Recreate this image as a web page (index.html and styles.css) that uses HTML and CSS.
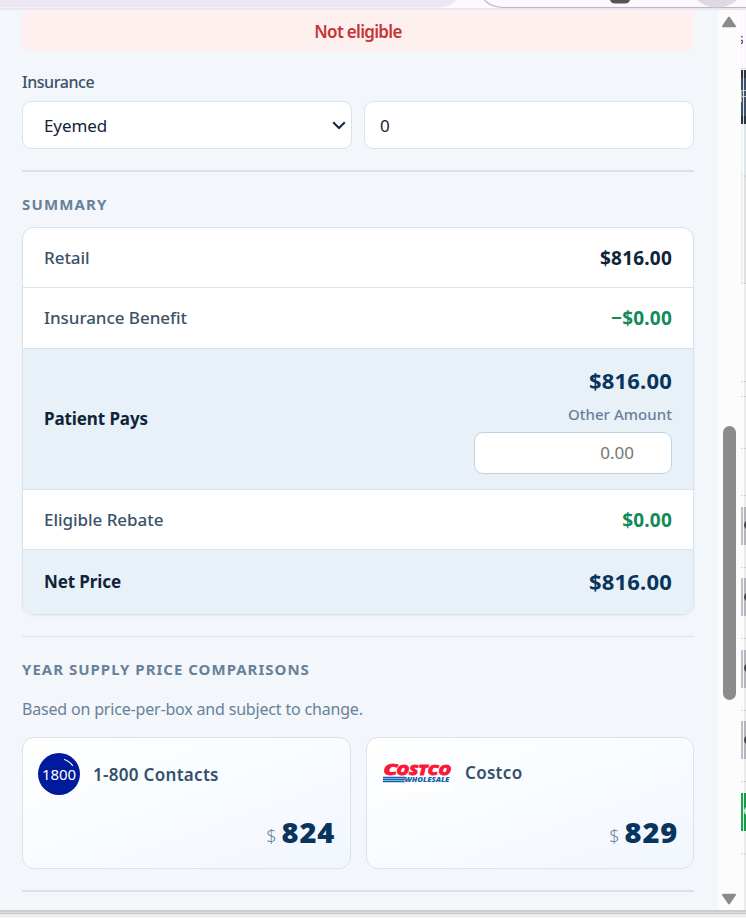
FILE: index.html
```
<!DOCTYPE html>
<html lang="en">
<head>
  <meta charset="UTF-8">
  <meta name="viewport" content="width=device-width, initial-scale=1.0">
  <title>Price Summary</title>
  <link rel="stylesheet" href="styles.css">
</head>
<body>
  <!-- Browser toolbar edge -->
  <svg class="toolbar" width="746" height="10" viewBox="0 0 746 10">
    <rect width="746" height="10" fill="#fdf7ff"/>
    <path d="M0 0H456Q450 7.500 438 7.500H0Z" fill="#ece6f2"/>
    <path d="M482 -3Q489 7.500 504 7.500H746" fill="none" stroke="#bdb7bf" stroke-width="1.200"/>
    <path d="M610 0H630Q629 3.500 625 3.500H615Q611 3.500 610 0Z" fill="#555"/>
    <path d="M697 0H737Q729 7.500 717 7.500Q705 7.500 697 0Z" fill="#dfd9e1"/>
    <rect y="8" width="746" height="2" fill="#ebe5ed"/>
  </svg>

  <div class="popup">
    <main class="panel">
      <div class="status">Not eligible</div>

      <label class="field-label" for="insurance">Insurance</label>
      <div class="field-row">
        <div class="select-wrap">
          <select id="insurance" class="control">
            <option>Eyemed</option>
          </select>
          <svg class="chevron" width="14" height="9" viewBox="0 0 14 9">
            <path d="M1.200 1.200L7 7L12.800 1.200" fill="none" stroke="#15263a" stroke-width="2"/>
          </svg>
        </div>
        <input type="text" class="control amount" value="0" aria-label="Benefit amount">
      </div>

      <hr class="divider">

      <h2 class="section-title summary-title">Summary</h2>
      <div class="summary">
        <div class="row">
          <span class="label retail">Retail</span>
          <span class="value">$816.00</span>
        </div>
        <div class="row benefit-row">
          <span class="label">Insurance Benefit</span>
          <span class="value green">−$0.00</span>
        </div>
        <div class="row total patient">
          <span class="label">Patient Pays</span>
          <div class="patient-amount">
            <span class="value">$816.00</span>
            <label class="other-label" for="other">Other Amount</label>
            <input type="text" id="other" class="other-input" placeholder="0.00">
          </div>
        </div>
        <div class="row">
          <span class="label">Eligible Rebate</span>
          <span class="value green">$0.00</span>
        </div>
        <div class="row total net">
          <span class="label">Net Price</span>
          <span class="value">$816.00</span>
        </div>
      </div>

      <hr class="divider thin">

      <h2 class="section-title compare-title">Year Supply Price Comparisons</h2>
      <p class="note">Based on price-per-box and subject to change.</p>
      <div class="compare">
        <div class="card">
          <div class="card-head">
            <svg width="42" height="42" viewBox="0 0 42 42">
              <circle cx="21" cy="21" r="21" fill="#001a9c"/>
              <text class="logo-1800" x="21" y="26.500" text-anchor="middle" textLength="34">1800</text>
              <path d="M26.500 6.500Q32 8.500 34.500 12.500" fill="none" stroke="#fff" stroke-width="1.200" stroke-linecap="round"/>
            </svg>
            <span class="store">1-800 Contacts</span>
          </div>
          <div class="price"><span class="currency">$</span><span class="number">824</span></div>
        </div>
        <div class="card">
          <div class="card-head">
            <svg width="70" height="38" viewBox="0 0 70 38">
              <rect width="70" height="38" fill="#fff"/>
              <g class="logo-costco">
                <text x="1.500" y="21.800" font-size="16.500" textLength="14" lengthAdjust="spacingAndGlyphs">C</text>
                <text x="14.500" y="21.800" font-size="14" textLength="54.500" lengthAdjust="spacingAndGlyphs">OSTCO</text>
              </g>
              <path d="M1 24.500H23.500M1 26.500H23M1 28.500H22.500" stroke="#1261ad" stroke-width="1.300"/>
              <text class="logo-wholesale" x="22.500" y="29" textLength="45" lengthAdjust="spacingAndGlyphs">WHOLESALE</text>
            </svg>
            <span class="store">Costco</span>
          </div>
          <div class="price"><span class="currency">$</span><span class="number">829</span></div>
        </div>
      </div>

      <hr class="divider last">
    </main>

    <div class="scrollbar">
      <svg width="16" height="12" viewBox="0 0 16 12"><path d="M8 1.500L14 10.300H2Z" fill="#8b8b8b" stroke="#8b8b8b" stroke-width="2" stroke-linejoin="round"/></svg>
      <div class="thumb"></div>
      <svg width="16" height="12" viewBox="0 0 16 12"><path d="M8 10.500L14 1.700H2Z" fill="#8b8b8b" stroke="#8b8b8b" stroke-width="2" stroke-linejoin="round"/></svg>
    </div>

    <!-- Sliver of the page behind the popup -->
    <svg class="behind" width="5" height="900" viewBox="0 10 5 900">
      <rect y="10" width="5" height="900" fill="#fafafa"/>
      <rect y="10" width="5" height="59" fill="#fcf6fd"/>
      <text class="behind-text" x="-4" y="44">s</text>
      <path d="M0 68.500H5" stroke="#ddd5de"/>
      <rect y="70" width="5" height="54" fill="#2a3442"/>
      <rect y="78" width="5" height="38" fill="#3d5269"/>
      <path d="M0 90.500H5M0 96.500H5" stroke="#c4c0bf"/>
      <rect y="90" width="1" height="12" fill="#b7aaa0"/>
      <rect y="124" width="5" height="51" fill="#e9f5fa"/>
      <rect y="175" width="5" height="108" fill="#efefee"/>
      <path d="M0 176H5M0 283.500H5M0 381.500H5M0 396.500H5M0 448.500H5M0 495.500H5M0 567.500H5M0 638.500H5M0 710.500H5M0 781.500H5M0 854H5" stroke="#d8d8d8"/>
      <path d="M0 507H5V545H0ZM0 578H5V616H0ZM0 650H5V688H0ZM0 721H5V759H0Z" fill="#bfc0c8"/>
      <rect y="793" width="5" height="38" fill="#1aa34a"/>
      <g fill="#4a4b50">
        <circle cx="7.500" cy="525" r="4.500"/><circle cx="7.500" cy="597" r="4.500"/>
        <circle cx="7.500" cy="668" r="4.500"/><circle cx="7.500" cy="740" r="4.500"/>
      </g>
      <circle cx="7.500" cy="811" r="4.500" fill="#d9f5ee"/>
      <rect x="2" y="10" width="1" height="900" fill="#fff" opacity=".85"/>
      <rect x="3" y="124" width="2" height="900" fill="#000" opacity=".06"/>
    </svg>
  </div>
  <div class="popup-shadow"></div>
</body>
</html>
```
FILE: styles.css
```
* {
  box-sizing: border-box;
}

body {
  margin: 0;
  height: 918px;
  overflow: hidden;
  font-family: 'Segoe UI', 'Noto Sans', 'Open Sans', sans-serif;
  color: #0f2438;
  background-color: #f2f2f2;
}

svg {
  display: block;
  flex-shrink: 0;
}

.popup {
  display: flex;
  height: 900px;
}

.panel {
  width: 718px;
  padding: 1px 24px 0 22px;
  background-color: #f3f6fb;
}

.status {
  height: 40px;
  line-height: 42px;
  text-align: center;
  font-size: 17px;
  font-weight: 600;
  letter-spacing: -0.7px;
  color: #c53538;
  background-color: #fff0f0;
  border-radius: 6px;
}

.field-label {
  display: block;
  height: 24px;
  margin-top: 19px;
  line-height: 24px;
  font-size: 16px;
  font-weight: 500;
  letter-spacing: -0.45px;
  color: #3b5268;
}

.field-row {
  display: grid;
  grid-template-columns: 1fr 1fr;
  gap: 12px;
  margin-top: 7px;
}

.select-wrap {
  position: relative;
}

.control {
  display: block;
  width: 100%;
  height: 48px;
  padding: 0 15px;
  font-family: inherit;
  font-size: 17px;
  letter-spacing: -0.1px;
  color: #0f2438;
  background-color: #fff;
  border: 1px solid #d7e3ef;
  border-radius: 9px;
  outline: none;
}

select.control {
  padding-left: 21px;
  appearance: none;
}

.chevron {
  position: absolute;
  top: 20px;
  right: 6px;
}

.divider {
  height: 2px;
  margin: 21px 0 0;
  border: none;
  background-color: #d7e2ee;
}

.section-title {
  margin: 0;
  height: 24px;
  line-height: 24px;
  font-size: 15px;
  font-weight: 700;
  letter-spacing: 1px;
  text-transform: uppercase;
  color: #688199;
}

.summary-title {
  margin-top: 20px;
  letter-spacing: 1.15px;
}

.summary {
  height: 388px;
  margin-top: 11px;
  overflow: hidden;
  background-color: #fff;
  border: 1px solid #d7e3ef;
  border-radius: 12px;
  box-shadow: 0 1px 3px rgba(15, 36, 56, 0.05);
}

.row {
  display: flex;
  justify-content: space-between;
  align-items: center;
  height: 60px;
  padding: 0 21px;
  border-bottom: 1px solid #d7e3ef;
}

.benefit-row {
  height: 61px;
  padding-bottom: 1px;
}

.label {
  font-size: 17px;
  font-weight: 500;
  letter-spacing: -0.05px;
  color: #3b5268;
}

.value {
  font-size: 19px;
  font-weight: 700;
  letter-spacing: 0.2px;
}

.green {
  color: #16895a;
}

.total {
  background-color: #e8f0f8;
}

.total .label {
  font-weight: 700;
  letter-spacing: -0.1px;
  color: #0f2438;
}

.total .value {
  font-size: 22px;
  color: #08355d;
}

.patient {
  height: 141px;
}

.patient .label {
  padding-bottom: 2px;
}

.patient-amount {
  display: flex;
  flex-direction: column;
  align-items: flex-end;
}

.patient .value {
  line-height: 30px;
}

.other-label {
  margin-top: 8px;
  line-height: 22px;
  font-size: 15px;
  font-weight: 500;
  letter-spacing: 0.05px;
  color: #688199;
}

.other-input {
  width: 198px;
  height: 42px;
  margin-top: 7px;
  padding: 0 37px 0 12px;
  font-family: inherit;
  font-size: 17px;
  text-align: right;
  background-color: #fff;
  border: 1px solid #bdd3e6;
  border-radius: 9px;
}

.other-input::placeholder {
  color: #757575;
}

.net {
  height: 65px;
  padding-bottom: 3px;
  border-bottom: none;
}

.thin {
  height: 1px;
}

.compare-title {
  margin-top: 20px;
}

.note {
  height: 24px;
  margin: 16px 0 0;
  line-height: 24px;
  font-size: 16px;
  letter-spacing: -0.18px;
  white-space: nowrap;
  color: #688199;
}

.compare {
  display: grid;
  grid-template-columns: 329px 328px;
  gap: 15px;
  margin-top: 16px;
}

.card {
  display: flex;
  flex-direction: column;
  justify-content: space-between;
  height: 132px;
  padding: 15px 15px 12px;
  background-image: linear-gradient(160deg, #fff, #f8fcff 50%, #f2f6fe);
  border: 1px solid #d7e3ef;
  border-radius: 12px;
}

.card-head {
  display: flex;
  align-items: center;
  gap: 13px;
}

.store {
  font-size: 17px;
  font-weight: 600;
  letter-spacing: 0.3px;
  color: #34506a;
}

.price {
  display: flex;
  justify-content: flex-end;
  align-items: baseline;
  gap: 5px;
  line-height: 40px;
}

.currency {
  font-size: 18px;
  font-weight: 300;
  color: #688199;
}

.number {
  font-size: 29px;
  font-weight: 900;
  letter-spacing: 0.8px;
  color: #08355d;
}

.logo-1800 {
  font-family: 'Noto Sans', sans-serif;
  font-size: 15px;
  font-weight: 400;
  fill: #fff;
}

.logo-costco {
  font-family: 'Open Sans', sans-serif;
  font-weight: 800;
  font-style: italic;
  fill: #fb1738;
  stroke: #fb1738;
  stroke-width: 0.8px;
}

.logo-wholesale {
  font-family: 'Open Sans', sans-serif;
  font-size: 6.5px;
  font-weight: 800;
  font-style: italic;
  fill: #1261ad;
}

.scrollbar {
  display: flex;
  flex-direction: column;
  align-items: center;
  width: 23px;
  padding: 6px 1px 5px 0;
  background-color: #fcfcfc;
}

.thumb {
  width: 13px;
  height: 274px;
  margin: 398px 0 auto;
  border-radius: 7px;
  background-color: #8b8b8b;
}

.behind-text {
  font-size: 14px;
  fill: #42327a;
}

.popup-shadow {
  height: 8px;
  background-image: linear-gradient(#cdcdcd 0 2px, #dcdcdc 2px 3px, #c5c9c7 3px 4px, #e8e8e8 4px, #f6f6f6);
}
```
